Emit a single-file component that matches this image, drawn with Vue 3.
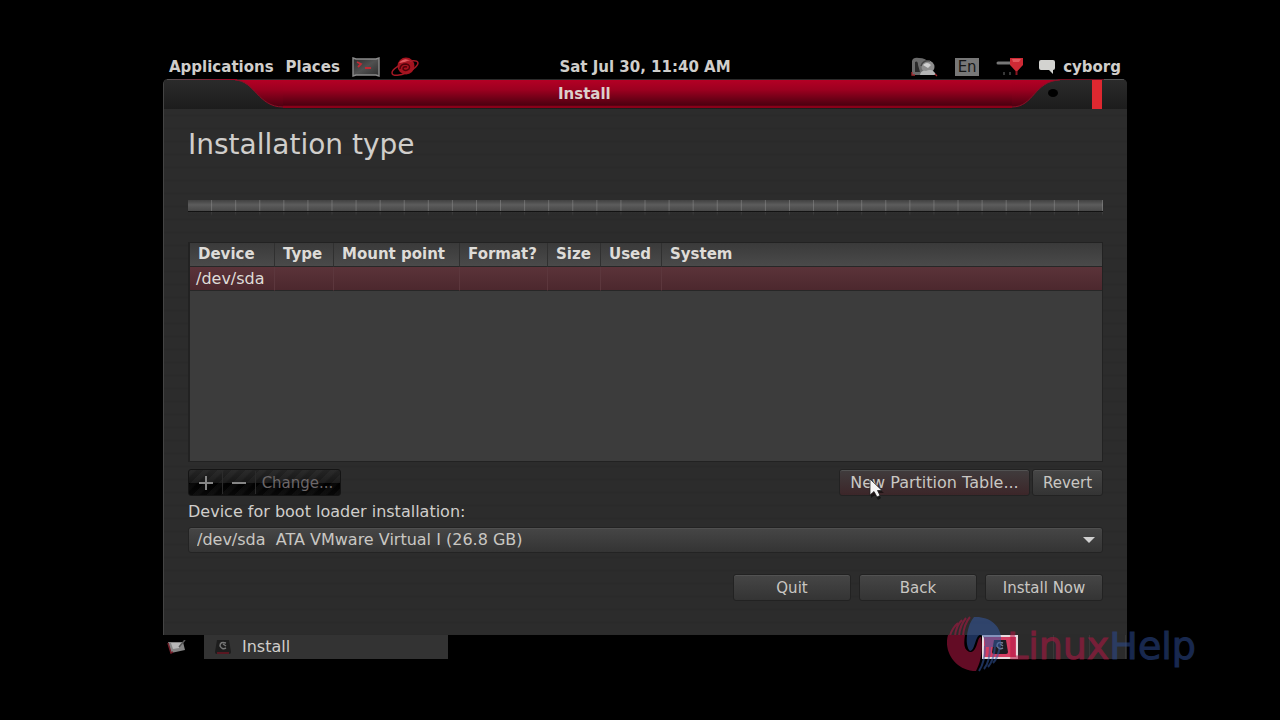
<script setup>
const columns = ['Device', 'Type', 'Mount point', 'Format?', 'Size', 'Used', 'System']
const widths = ['c85', 'c59', 'c126', 'c88', 'c53', 'c61', 'rest']
</script>

<template>
  <div class="page">
    <div class="screen">
      <header class="panel">
        <nav class="menus">
          <button class="menu">Applications</button>
          <button class="menu">Places</button>
          <button class="launch" aria-label="Terminal">
            <svg width="28" height="20" viewBox="0 0 28 20">
              <defs>
                <linearGradient id="term" x1="0" y1="0" x2="1" y2="1">
                  <stop offset="0" stop-color="#2a2a2a" />
                  <stop offset="0.5" stop-color="#505050" />
                  <stop offset="1" stop-color="#2c2c2c" />
                </linearGradient>
              </defs>
              <path d="M1 1L4 2H24L27 1V19L24 18H4L1 19Z" fill="url(#term)" stroke="#8b8b8b" stroke-width="1.4" />
              <path d="M5 5L9 7L6 10M13 11H19" fill="none" stroke="#c02a34" stroke-width="1.8" />
            </svg>
          </button>
          <button class="launch" aria-label="Web browser">
            <svg width="30" height="20" viewBox="0 0 30 20">
              <circle cx="16" cy="9" r="8.500" fill="#a5121e" />
              <path d="M9 6Q15 -1 22 5L16 5Z" fill="#e35a60" />
              <ellipse cx="15" cy="11" rx="14" ry="5" transform="rotate(-24 15 11)" fill="none" stroke="#a51824" stroke-width="1.500" />
              <path d="M10 12Q10 7 16 7Q21 8 19 12Q15 15 13 12Q13 9 17 10" fill="none" stroke="#4e0209" stroke-width="1.400" />
            </svg>
          </button>
        </nav>
        <time class="clock">Sat Jul 30, 11:40 AM</time>
        <div class="tray">
          <svg width="27" height="20" viewBox="0 0 27 20">
            <path d="M1 18V4Q2 0 8 1Q15 1 18 6L12 18Z" fill="#6b6b6b" />
            <path d="M4 15V5Q7 3 7 8L9 15Z" fill="#292929" />
            <circle cx="17" cy="10" r="6.500" fill="#8d8d8d" />
            <path d="M12 8Q16 4 20 8L17 11Z" fill="#d0d0d0" />
            <path d="M9 18Q10 13 15 14Q22 11 25 18Z" fill="#b4b4b4" />
            <path d="M10 9Q12 3 19 4" fill="none" stroke="#444" stroke-width="1.500" />
            <path d="M1 15V18H4M24 17L26 19" fill="none" stroke="#a32b31" stroke-width="1.300" />
          </svg>
          <span class="lang">En</span>
          <svg width="28" height="19" viewBox="0 0 28 19">
            <path d="M2 6H14" stroke="#777" stroke-width="3" stroke-linecap="round" />
            <path d="M14 1H27V8L20.500 15L14 8Z" fill="#cf2a35" />
            <path d="M16 2H25L23 5H17Z" fill="#e3575d" />
            <path d="M8 15V18M14 15V18" stroke="#555" stroke-width="1.300" />
            <path d="M20.500 14V18" stroke="#851520" stroke-width="2" />
          </svg>
          <svg width="18" height="16" viewBox="0 0 18 16">
            <path d="M3 1H15Q17 1 17 3V9Q17 11 15 11V15L11 11H3Q1 11 1 9V3Q1 1 3 1Z" fill="#d3d3d0" />
          </svg>
          <span class="user">cyborg</span>
        </div>
      </header>

      <main class="window">
        <div class="titlebar">
          <svg class="cap" width="120" height="30" viewBox="0 0 120 30">
            <defs>
              <linearGradient id="redfill" x1="0" y1="0" x2="0" y2="1">
                <stop offset="0" stop-color="#b40025" />
                <stop offset="0.35" stop-color="#9c0020" />
                <stop offset="1" stop-color="#4c0010" />
              </linearGradient>
              <linearGradient id="edge" x1="0" y1="0" x2="1" y2="0">
                <stop offset="0" stop-color="#555" />
                <stop offset="1" stop-color="#a00020" />
              </linearGradient>
            </defs>
            <path d="M72 1C92 2 95 28 120 28V1Z" fill="url(#redfill)" />
            <path d="M72 1C92 2 95 28 120 28" fill="none" stroke="#8e1028" />
            <path d="M4 0H74V1H4Z" fill="url(#edge)" />
          </svg>
          <h2 class="title">Install</h2>
          <svg class="cap" width="115" height="30" viewBox="0 0 115 30">
            <path d="M0 1H48C22 2 22 28 0 28Z" fill="url(#redfill)" />
            <path d="M0 28C22 28 22 2 48 1" fill="none" stroke="#8e1028" />
            <path d="M46 0H92V1H46Z" fill="#6e1022" />
            <path d="M92 0H112V1H92Z" fill="#555" />
            <ellipse cx="41" cy="14" rx="5" ry="4" fill="#000" />
            <path d="M80 1H90V30H80Z" fill="#de2830" />
          </svg>
        </div>

        <div class="content">
          <h1>Installation type</h1>
          <div class="progress" role="progressbar" aria-label="Installation progress"></div>

          <div class="list">
            <table>
              <colgroup><col v-for="w in widths" :key="w" :class="w" /></colgroup>
              <thead>
                <tr><th v-for="c in columns" :key="c">{{ c }}</th></tr>
              </thead>
              <tbody>
                <tr><td>/dev/sda</td><td v-for="n in 6" :key="n"></td></tr>
              </tbody>
            </table>
          </div>

          <div class="actions">
            <div class="group">
              <button disabled aria-label="Add">
                <svg width="14" height="14" viewBox="0 0 14 14"><path d="M0 7H14M7 0V14" stroke="#868686" stroke-width="2" /></svg>
              </button>
              <button disabled aria-label="Remove">
                <svg width="14" height="14" viewBox="0 0 14 14"><path d="M0 7H14" stroke="#868686" stroke-width="2" /></svg>
              </button>
              <button disabled class="change">Change...</button>
            </div>
            <div class="right">
              <button class="btn hot">New Partition Table...</button>
              <button class="btn revert">Revert</button>
              <svg class="pointer" width="18" height="24" viewBox="0 0 18 24">
                <path d="M2 3V20L6 17L9 22L12 20L9 15H15Z" fill="#000" opacity="0.5" />
                <path d="M1 1V17L5 13.500L8 19L11 17.500L8.500 12.500H13Z" fill="#f4f4f4" stroke="#222" stroke-width="0.800" />
              </svg>
            </div>
          </div>

          <label for="boot">Device for boot loader installation:</label>
          <div class="combo">
            <select id="boot">
              <option>/dev/sda&nbsp; ATA VMware Virtual I (26.8 GB)</option>
            </select>
            <svg class="arrow" width="12" height="6" viewBox="0 0 12 6"><path d="M0 0H12L6 6Z" fill="#d0d0d0" /></svg>
          </div>

          <div class="footer">
            <button class="btn">Quit</button>
            <button class="btn">Back</button>
            <button class="btn">Install Now</button>
          </div>
        </div>
      </main>

      <footer class="taskbar">
        <button class="desk" aria-label="Show desktop">
          <svg width="20" height="14" viewBox="0 0 20 14">
            <path d="M1 2L16 2L18 10L4 13Z" fill="#858585" />
            <path d="M4 3L14 3L12 8L6 9Z" fill="#b8b8b8" />
            <path d="M1 3L4 13L6 12" fill="none" stroke="#74202b" stroke-width="1.500" />
            <path d="M12 7L18 0" stroke="#555" stroke-width="1.500" />
          </svg>
        </button>
        <button class="task">
          <svg width="18" height="16" viewBox="0 0 18 16">
            <path d="M3 1H15L17 13Q17 15 15 15H3Q1 15 1 13Z" fill="#1d1d1d" />
            <path d="M12 4Q6 2 6 7Q8 11 12 9M9 5L12 7" fill="none" stroke="#777" stroke-width="1.500" />
            <path d="M3 14H15" stroke="#7b1524" stroke-width="1.300" />
          </svg>
          <span>Install</span>
        </button>
        <div class="pager">
          <button class="cell on" aria-label="Workspace 1">
            <svg width="18" height="16" viewBox="0 0 18 16">
              <path d="M3 1H15L17 13Q17 15 15 15H3Q1 15 1 13Z" fill="#1c1c20" />
              <path d="M12 4Q6 2 6 7Q8 11 12 9M9 5L12 7" fill="none" stroke="#777f92" stroke-width="1.500" />
            </svg>
          </button>
          <button class="cell" aria-label="Workspace 2"></button>
          <button class="cell" aria-label="Workspace 3"></button>
          <button class="cell" aria-label="Workspace 4"></button>
        </div>
        <div class="mark">
          <svg width="56" height="56" viewBox="0 0 56 56">
            <path d="M1 19C-4 36 9 55 29 55C34 46 36 34 34 21C30 20 31 36 23 36C16 34 17 26 18 19Z" fill="#b41644" />
            <path d="M3 20Q5 12 11 7M8 20Q9 10 15 4M12 20Q13 9 19 2M16 20Q17 8 23 1" fill="none" stroke="#b41644" stroke-width="2" />
            <path d="M27 1C42 0 53 9 54 21V31H38C38 24 37 19 33 19C28 20 28 35 23 35C17 29 20 9 27 1Z" fill="#3458a0" />
            <path d="M38 30Q38 46 32 55M43 30Q43 46 37 53M48 30Q47 44 41 51M53 30Q51 42 46 47" fill="none" stroke="#3458a0" stroke-width="2" />
          </svg>
          <span class="word"><b>Linux</b>Help</span>
        </div>
      </footer>
    </div>
  </div>
</template>

<style>
body { background: #000; }
</style>

<style scoped>
* { box-sizing: border-box; }
.page {
  min-height: 100vh;
  padding: 54px 153px 0 163px;
  background: #000;
  color: #d0cecb;
  font: 16px/24px "DejaVu Sans", sans-serif;
}
svg { display: block; flex: none; }
button, select { font: inherit; color: inherit; border: 0; padding: 0; margin: 0; background: none; white-space: nowrap; }
.panel { display: grid; grid-template-columns: 1fr auto 1fr; align-items: center; height: 25px; padding: 0 6px; font-size: 15px; font-weight: 700; }
.menus, .tray { display: flex; align-items: center; }
.menus { gap: 12px; }
.launch + .launch { margin-left: -2px; }
.tray { justify-content: flex-end; }
.lang { width: 24px; margin: 0 17px; background: #777; color: #161616; font-weight: 400; line-height: 18px; text-align: center; }
.tray svg:nth-of-type(2) { margin-right: 14px; }
.user { margin-left: 7px; }
.window { border-left: 1px solid #444; border-radius: 5px 5px 0 0; background: #2b2b2b; overflow: hidden; }
.titlebar { display: flex; height: 30px; margin-left: -1px; background: linear-gradient(#2b2b2b, #1c1c1c); }
.title {
  flex: 1; margin: 1px 0; padding-left: 275px; color: #dcd0cc;
  font-size: 15px; line-height: 28px; height: 28px;
  background: linear-gradient(#b40025, #9c0020 35%, #4c0010 90%, #8a0019 94%);
}
.content {
  padding: 18px 24px 34px;
  background:
    repeating-linear-gradient(transparent 0 5px, rgba(0, 0, 0, 0.05) 6px 7px, transparent 8px 13px),
    #2c2c2c;
}
h1 { margin: 0 0 37px; font-size: 28px; line-height: 36px; font-weight: 400; }
.progress {
  height: 16px; margin-bottom: 26px;
  background:
    linear-gradient(transparent 69%, #121212 70%, #121212 76%, rgba(43, 43, 43, 0.6) 77%, #2b2b2b),
    linear-gradient(90deg, transparent calc(100% - 1px), rgba(160, 160, 160, 0.4) 0) 0 0 / calc(100% / 38) 100%,
    linear-gradient(#414141, #5c5c5c 30%, #484848 69%, #333 77%, #2b2b2b);
}
.list { height: 220px; border: 1px solid #222; border-left-width: 2px; background: #3c3c3c; }
table { width: 100%; table-layout: fixed; border-collapse: separate; border-spacing: 0; }
.c85 { width: 85px; } .c59 { width: 59px; } .c126 { width: 126px; } .c88 { width: 88px; } .c53 { width: 53px; } .c61 { width: 61px; }
th, td { height: 24px; line-height: 23px; text-align: left; white-space: nowrap; border-bottom: 1px solid #272727; }
th { padding: 0 0 0 8px; font-size: 15px; background: linear-gradient(#3a3a3a, #4a4a4a); border-right: 1px solid #303030; color: #dedcd8; }
td { padding: 0 0 0 6px; background: linear-gradient(#5b3339, #4c282e); border-right: 1px solid #5c373d; color: #dedcd8; }
th:last-child, td:last-child { border-right: 0; }
.actions { display: flex; justify-content: space-between; margin: 7px 0 4px; height: 27px; }
.group {
  display: flex; padding: 1px; border: 1px solid #141414; border-radius: 3px; color: #6c6769;
  background: repeating-linear-gradient(135deg, rgba(255, 255, 255, 0.03) 0 4px, transparent 6px 10px), linear-gradient(#242424, #171717 50%, #000 51%, #080808);
}
.group button { display: flex; align-items: center; justify-content: center; width: 33px; border-right: 1px solid #2b2b2b; }
.group .change { width: 83px; border: 0; font-size: 15px; }
.right { position: relative; display: flex; gap: 2px; }
.pointer { position: absolute; left: 30px; top: 9px; }
.btn {
  height: 27px; border: 1px solid #222; border-radius: 3px; color: #c9c7c3; line-height: 24px;
  background: linear-gradient(#464646, #343434); box-shadow: inset 0 1px #525252;
}
.hot { width: 191px; background: linear-gradient(#403c3d, #3c2629); }
.revert { width: 71px; font-size: 15px; }
label { display: block; margin-bottom: 3px; }
.combo { position: relative; }
select {
  display: block; appearance: none; width: 100%; height: 26px; padding: 0 8px;
  border: 1px solid #232323; border-radius: 3px; color: #c9c7c3;
  background: linear-gradient(#464646, #343434); box-shadow: inset 0 1px #505050;
}
.arrow { position: absolute; right: 8px; top: 10px; }
.footer { display: flex; justify-content: flex-end; gap: 8px; margin-top: 21px; }
.footer .btn { width: 118px; font-size: 15px; }
.taskbar { position: relative; display: flex; height: 24px; }
.desk { width: 41px; padding-left: 4px; }
.task { display: flex; align-items: center; gap: 10px; width: 244px; padding-left: 10px; background: #333; }
.pager { display: flex; margin-left: auto; padding-right: 1px; background: #2b2b2b; }
.cell { width: 36px; border-right: 1px solid #383838; }
.on { display: flex; align-items: center; justify-content: center; background: #d43e62; border: 2px solid #e8dade; }
.mark { position: absolute; right: -69px; bottom: -17px; display: flex; align-items: flex-start; gap: 4px; opacity: 0.55; pointer-events: none; }
.word { font: 38px/60px "DejaVu Sans", sans-serif; color: #2c4a8e; -webkit-text-stroke: 1px currentColor; }
.word b { font-weight: 400; color: #b41644; }
</style>
